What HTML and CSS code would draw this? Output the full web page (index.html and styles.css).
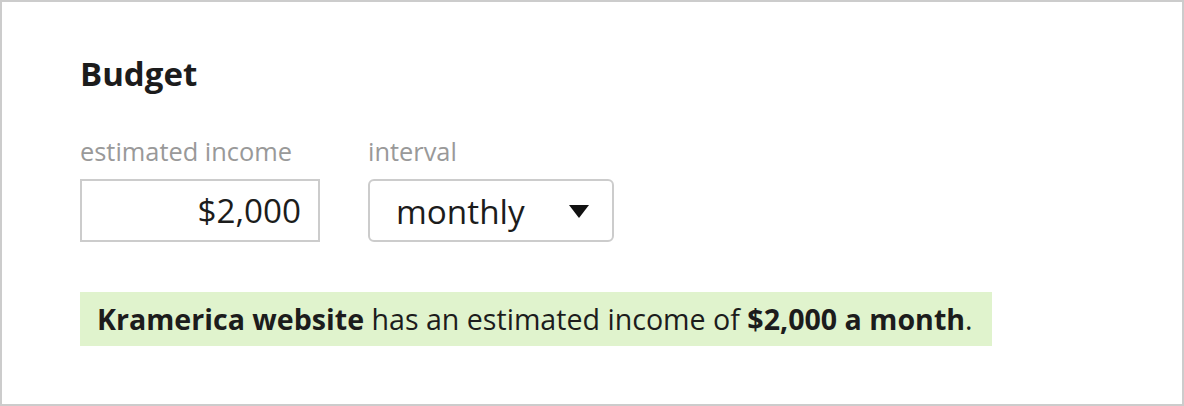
FILE: index.html
```html
<!DOCTYPE html>
<html>
<head>
<meta charset="utf-8">
<link rel="stylesheet" href="styles.css">
</head>
<body>
<div class="frame">
  <h2 class="title">Budget</h2>
  <div class="fields">
    <div class="field">
      <label class="label">estimated income</label>
      <div class="input">$2,000</div>
    </div>
    <div class="field">
      <label class="label">interval</label>
      <div class="select"><span>monthly</span><span class="caret"></span></div>
    </div>
  </div>
  <p class="note"><b>Kramerica website</b> has an estimated income of <b>$2,000 a month</b>.</p>
</div>
</body>
</html>
```
FILE: styles.css
```css
html, body { margin: 0; padding: 0; background: #fff; }
body { font-family: "Open Sans", "Noto Sans", sans-serif; color: #1c1c1c; }
.frame {
  width: 1184px; height: 406px; box-sizing: border-box;
  border: 2px solid #cccccc;
  padding: 52px 78px 0 78px;
}
.title { margin: 0; font-size: 33px; font-weight: 700; line-height: 40px; color: #1c1c1c; }
.fields { display: flex; gap: 48px; margin-top: 42px; }
.field { display: flex; flex-direction: column; }
.label { font-size: 25.4px; color: #999; line-height: 30px; }
.input {
  margin-top: 13px; width: 240px; height: 63px; box-sizing: border-box;
  border: 2px solid #cccccc;
  display: flex; align-items: center; justify-content: flex-end; padding-right: 17px;
  font-size: 33.2px; color: #1c1c1c;
}
.select {
  margin-top: 13px; width: 246px; height: 63px; box-sizing: border-box;
  border: 2px solid #cccccc; border-radius: 6px;
  display: flex; align-items: center; justify-content: space-between;
  padding: 0 23px 0 26px; font-size: 33.3px; color: #1c1c1c;
}
.caret {
  width: 0; height: 0; margin-top: 2px;
  border-left: 10px solid transparent; border-right: 10px solid transparent;
  border-top: 13px solid #111;
}
.note {
  margin: 50px 0 0 0; width: 912px; height: 54px; box-sizing: border-box;
  background: #e0f3cd; padding: 0 17px; font-size: 28.6px; line-height: 54px;
  color: #1c1c1c;
}
.note b { font-weight: 700; }
```
